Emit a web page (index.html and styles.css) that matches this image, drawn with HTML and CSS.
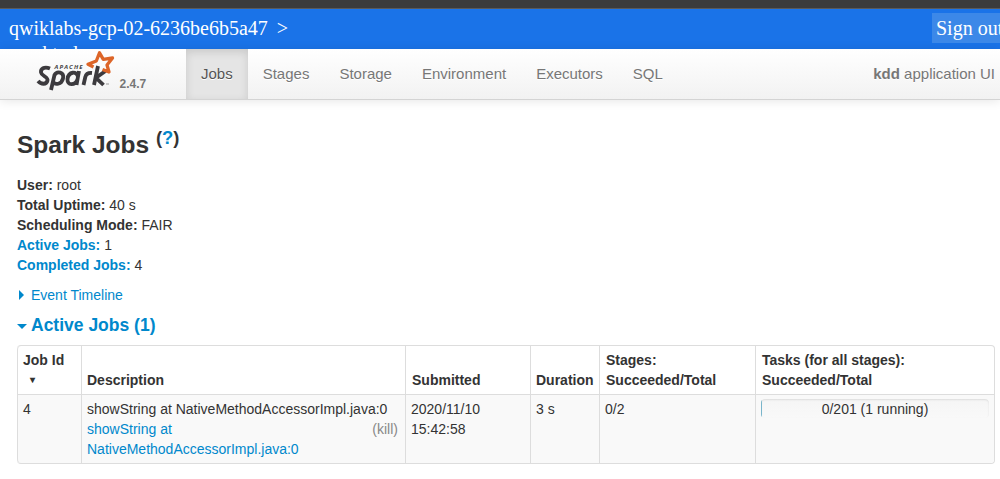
FILE: index.html
```html
<!DOCTYPE html>
<html lang="en">
<head>
<meta charset="utf-8">
<title>kdd - Spark Jobs</title>
<link rel="stylesheet" href="styles.css">
</head>
<body>
<div class="window-edge"></div>
<header class="gateway">
  <div class="gateway-path">qwiklabs-gcp-02-6236be6b5a47<span class="chevron">&gt;</span><br>sparktodp</div>
  <a class="sign-out">Sign out</a>
</header>
<nav class="navbar">
  <a class="brand">
    <svg class="logo" width="80" height="44" viewBox="0 0 80 44">
      <text class="logo-small" x="19.500" y="19.500" textLength="28">APACHE</text>
      <g class="logo-word">
        <path d="M15 19.500C9 17 5.500 20 6 23.500C6.500 27 13.500 28 12.500 31.500C11.500 36 6 35.500 3 32"/>
        <path d="M16 41L19.500 26C22 21.500 29.500 23 28 29.500C26.500 35.500 20 36.500 18 32.500"/>
        <path d="M44 22L41.500 36M43 28C42 21.500 33.500 22.500 32.500 30C32 37 40 36.500 42.300 31"/>
        <path d="M48.500 36L50.300 28Q51.500 23.500 57 24"/>
        <path d="M63 17L59 36M70.500 22L61 28.800L68.500 36"/>
      </g>
      <path class="logo-star" d="M58.500 18L53 15.300L61.300 12L64.500 3.800L68.300 10.300L77.500 9L72 16L74 23L67.500 20.500"/>
      <path class="logo-tm" d="M71 35h3"/>
    </svg>
    <span class="version">2.4.7</span>
  </a>
  <ul class="nav">
    <li class="active">Jobs</li>
    <li>Stages</li>
    <li>Storage</li>
    <li>Environment</li>
    <li>Executors</li>
    <li>SQL</li>
  </ul>
  <p class="app-name"><strong>kdd</strong> application UI</p>
</nav>
<main class="content">
  <h3>Spark Jobs <sup>(<a>?</a>)</sup></h3>
  <ul class="summary">
    <li><strong>User:</strong> root</li>
    <li><strong>Total Uptime:</strong> 40 s</li>
    <li><strong>Scheduling Mode:</strong> FAIR</li>
    <li><a><strong>Active Jobs:</strong></a> 1</li>
    <li><a><strong>Completed Jobs:</strong></a> 4</li>
  </ul>
  <div class="timeline"><span class="arrow arrow-right"></span><a>Event Timeline</a></div>
  <h4><span class="arrow arrow-down"></span><a>Active Jobs (1)</a></h4>
  <table class="jobs">
    <colgroup><col class="c-id"><col class="c-desc"><col class="c-sub"><col class="c-dur"><col class="c-stages"><col></colgroup>
    <thead>
      <tr>
        <th>Job Id<span class="sort">▾</span></th>
        <th>Description</th>
        <th>Submitted</th>
        <th class="duration">Duration</th>
        <th>Stages: Succeeded/Total</th>
        <th>Tasks (for all stages):<br>Succeeded/Total</th>
      </tr>
    </thead>
    <tbody>
      <tr>
        <td>4</td>
        <td>
          <div class="nowrap">showString at NativeMethodAccessorImpl.java:0</div>
          <div class="job-row"><a>showString at<br>NativeMethodAccessorImpl.java:0</a><a class="kill">(kill)</a></div>
        </td>
        <td>2020/11/10 15:42:58</td>
        <td>3 s</td>
        <td>0/2</td>
        <td><div class="progress"><span>0/201 (1 running)</span></div></td>
      </tr>
    </tbody>
  </table>
</main>
</body>
</html>
```
FILE: styles.css
```css
body {
  margin: 0;
  background: #fff;
  color: #333;
  font: 14px/20px "Liberation Sans", Arial, sans-serif;
  overflow: hidden;
}
a { color: #08c; }
ul { list-style: none; margin: 0; padding: 0; }
.window-edge { height: 9px; background: #3b3b3b; border-bottom: 1px solid #5a5a5a; box-sizing: border-box; }
.gateway {
  display: flex;
  justify-content: space-between;
  height: 40px;
  overflow: hidden;
  background: #1a73e8;
  color: #fff;
  font: 20px/23px "Liberation Serif", "Times New Roman", serif;
}
.gateway-path { padding: 7px 0 0 9px; line-height: 25px; white-space: nowrap; }
.chevron { margin-left: 9px; }
.sign-out {
  width: 68px;
  height: 30px;
  margin-top: 4px;
  padding-left: 4px;
  box-sizing: border-box;
  background: #3c88e8;
  color: #fff;
  line-height: 31px;
  white-space: nowrap;
  overflow: hidden;
}
.navbar {
  display: flex;
  height: 50px;
  border-bottom: 1px solid #d4d4d4;
  background: linear-gradient(#fff, #f2f2f2);
  box-shadow: 0 1px 10px rgba(0, 0, 0, .1);
  color: #777;
  font-size: 15px;
}
.brand { display: flex; width: 151px; padding-left: 35px; color: #777; }
.version { padding-top: 25px; margin-left: 4.5px; font-size: 12px; font-weight: bold; }
.logo-small { font: italic bold 6px "Open Sans", sans-serif; fill: #444; }
.logo-word { fill: none; stroke: #3c3a3e; stroke-width: 3.8; stroke-linejoin: round; }
.logo-star { fill: none; stroke: #dd6528; stroke-width: 3.3; stroke-linejoin: round; }
.logo-tm { stroke: #999; stroke-width: 1; }
.nav { display: flex; flex: 1; }
.nav li { padding: 15px 15px; text-shadow: 0 1px 0 #fff; }
.nav .active { color: #555; background: #e5e5e5; box-shadow: inset 0 3px 8px rgba(0, 0, 0, .125); }
.app-name { margin: 0; padding: 15px 5px 0 0; text-shadow: 0 1px 0 #fff; }
.content { padding: 25px 5px 0 17px; }
h3 { margin: 0 0 10px; font-size: 24.5px; line-height: 40px; }
sup { position: relative; top: -0.5em; font-size: 75%; line-height: 0; vertical-align: baseline; }
.timeline { display: flex; align-items: center; margin-top: 10px; }
.arrow { display: inline-block; width: 0; height: 0; }
.arrow-right { margin: 0 7px 0 2px; border-left: 5px solid #08c; border-top: 5px solid transparent; border-bottom: 5px solid transparent; }
.arrow-down { margin: 2px 4px 0 0; border-top: 5px solid #08c; border-left: 5px solid transparent; border-right: 5px solid transparent; }
h4 { display: flex; align-items: center; margin: 10px 0; font-size: 17.5px; line-height: 20px; }
.jobs {
  width: 978px;
  table-layout: fixed;
  border: 1px solid #ddd;
  border-left: 0;
  border-radius: 4px;
  border-collapse: separate;
  border-spacing: 0;
}
.c-id { width: 64px; }
.c-desc { width: 324px; }
.c-sub { width: 125px; }
.c-dur { width: 69px; }
.c-stages { width: 156px; }
.jobs th, .jobs td { padding: 4px 5px; border-left: 1px solid #ddd; text-align: left; vertical-align: top; }
.jobs th { vertical-align: bottom; }
.jobs th:nth-child(n+3) { padding-left: 6px; padding-right: 0; }
.jobs .duration:nth-child(n+3) { padding-left: 5px; }
.jobs td { border-top: 1px solid #ddd; background: #f9f9f9; }
.jobs th:first-child { border-top-left-radius: 4px; }
.jobs td:first-child { border-bottom-left-radius: 4px; }
.jobs td:last-child { border-bottom-right-radius: 4px; }
.sort { display: block; height: 20px; padding-left: 7px; font-size: 10px; line-height: 19px; }
.nowrap { white-space: nowrap; }
.job-row { display: flex; justify-content: space-between; padding-right: 2px; }
.kill { color: #888; }
.progress {
  height: 19px;
  border-radius: 4px;
  background: linear-gradient(90deg, #7cbad0 1px, transparent 1px), linear-gradient(#f5f5f5, #f9f9f9);
  box-shadow: inset 0 1px 2px rgba(0, 0, 0, .1);
  text-align: center;
}
```
